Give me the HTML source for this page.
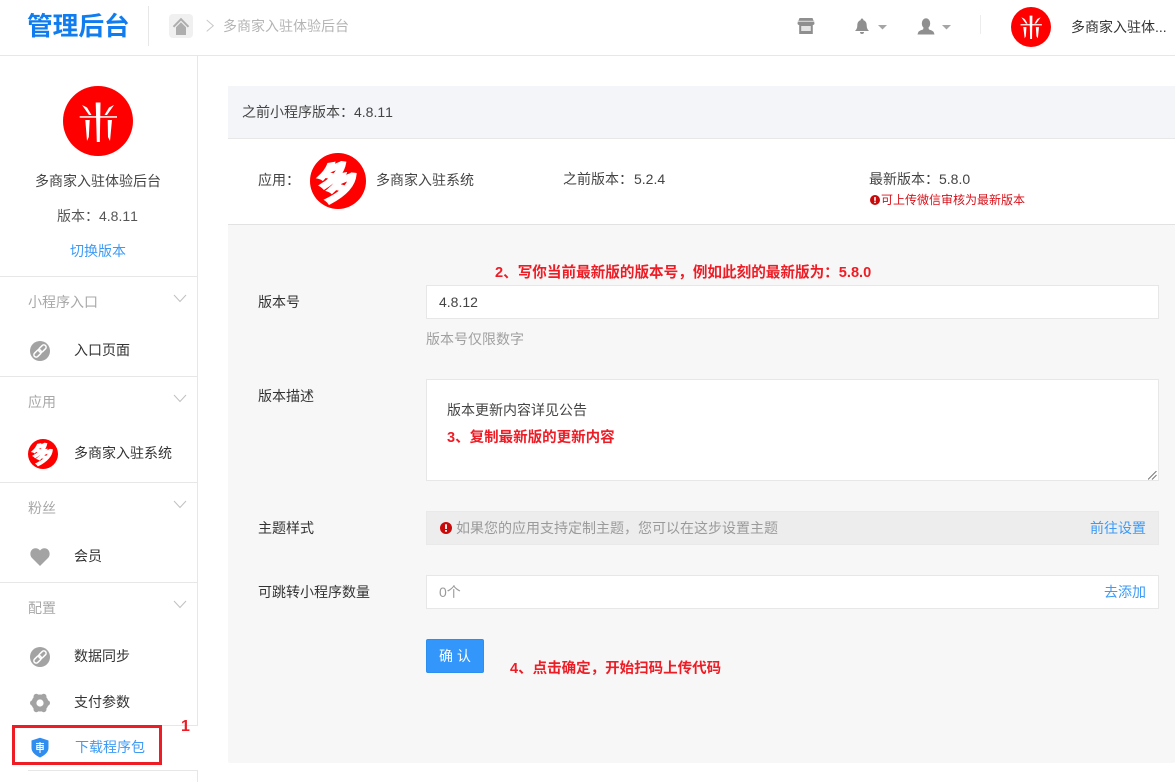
<!DOCTYPE html>
<html lang="zh">
<head>
<meta charset="utf-8">
<style>
html,body{margin:0;padding:0;background:#fff;}
body{width:1175px;height:782px;overflow:hidden;position:relative;font-family:"Liberation Sans","Noto Sans CJK SC",sans-serif;font-size:14px;color:#333;font-kerning:none;}
.a{position:absolute;}
.t{position:absolute;white-space:nowrap;line-height:20px;height:20px;}
.g{color:#a8a8a8;}
.d{color:#444;}
.b{color:#3d9bf5;}
.r{color:#ee1c25;font-weight:bold;font-size:14.5px;}
.line{position:absolute;background:#e7e7e7;}
.input{position:absolute;background:#fff;border:1px solid #e7e7e7;box-sizing:border-box;}
svg{position:absolute;display:block;}
.duo{position:absolute;border-radius:50%;background:#fe0000;overflow:hidden;}
.duo div{position:absolute;left:0;top:0;width:100%;height:100%;text-align:center;color:#fff;font-weight:bold;font-family:"Noto Sans CJK SC",sans-serif;-webkit-text-stroke-color:#fff;-webkit-text-stroke-style:solid;}
</style>
</head>
<body>
<!-- top bar -->
<div class="line" style="left:0;top:55px;width:1175px;height:1px;"></div>
<div class="t" style="left:27px;top:12px;font-size:25.7px;line-height:30px;height:30px;font-weight:bold;color:#0f7cf0;">管理后台</div>
<div class="line" style="left:148px;top:6px;width:1px;height:40px;"></div>
<div class="a" style="left:169px;top:14px;width:24px;height:24px;background:#f0f0f0;border-radius:4px;"></div>
<svg style="left:172px;top:17px" width="18" height="18" viewBox="0 0 18 18"><path d="M1.500 9.800 L9 2.200 L16.500 9.800" fill="none" stroke="#aeaeae" stroke-width="2"/><path d="M9 5.200 L14 10.200 V18 H4 V10.200 Z" fill="#aeaeae"/></svg>
<svg style="left:205px;top:19px" width="12" height="15" viewBox="0 0 12 15"><path d="M1.700 1 L8.300 6.700 L1.700 12.400" fill="none" stroke="#c8c8c8" stroke-width="1"/></svg>
<div class="t" style="left:223px;top:16px;color:#b4b4b4;">多商家入驻体验后台</div>

<svg style="left:797px;top:17px" width="18" height="18" viewBox="0 0 18 18"><path d="M2.500 1 H15.500 L17.500 6 Q17.500 8 15.800 8 V17 H2.200 V8 Q.5 8 .5 6 Z" fill="#8f8f8f"/><rect x="4.200" y="9" width="9.600" height="5" fill="#e4e4e4"/><rect x=".5" y="3.800" width="17" height="1" fill="#e0e0e0"/></svg>
<svg style="left:854px;top:18px" width="16" height="17" viewBox="0 0 16 17"><path d="M8 0.500 a1.300 1.300 0 0 1 1.300 1.600 C12 3 12.700 5 12.700 7.500 C12.700 10 13.500 11.500 15 13 H1 C2.500 11.500 3.300 10 3.300 7.500 C3.300 5 4 3 6.700 2.100 A1.300 1.300 0 0 1 8 .5 Z" fill="#8f8f8f"/><path d="M6 14 H10 A2 2 0 0 1 6 14 Z" fill="#8f8f8f"/></svg>
<svg style="left:878px;top:25px" width="9" height="5" viewBox="0 0 9 5"><path d="M0 0 H9 L4.500 4.500 Z" fill="#a5a5a5"/></svg>
<svg style="left:917px;top:18px" width="18" height="17" viewBox="0 0 18 17"><ellipse cx="9" cy="5.500" rx="4.200" ry="5.300" fill="#8f8f8f"/><path d="M6.500 10 L11.500 10 L12 11.500 Q17 12.500 17.500 16.500 H.5 Q1 12.500 6 11.500 Z" fill="#8f8f8f"/></svg>
<svg style="left:942px;top:25px" width="9" height="5" viewBox="0 0 9 5"><path d="M0 0 H9 L4.500 4.500 Z" fill="#a5a5a5"/></svg>
<div class="line" style="left:980px;top:15px;width:1px;height:19px;background:#ececec;"></div>
<svg style="left:1011px;top:7px" width="40" height="40" viewBox="0 0 70 70"><circle cx="35" cy="35" r="35" fill="#fe0000"/><g fill="#fff"><rect x="16.700" y="30" width="37.300" height="2.200"/><path d="M32.500 15 H37.500 L36.800 56 H33.500 Z"/><path d="M18 18 L24 21 L29 29 L26 29 Z"/><path d="M52 18 L46 21 L41 29 L44 29 Z"/><path d="M21.500 35 H27 L26 51 L24 55 Z"/><path d="M43.500 35 H49 L47 55 L44.500 51 Z"/></g></svg>
<div class="t" style="left:1071px;top:17px;color:#333;">多商家入驻体...</div>

<!-- sidebar -->
<div class="line" style="left:197px;top:56px;width:1px;height:670px;"></div>
<div class="line" style="left:197px;top:770px;width:1px;height:12px;"></div>
<svg style="left:63px;top:86px" width="70" height="70" viewBox="0 0 70 70"><circle cx="35" cy="35" r="35" fill="#fe0000"/><g fill="#fff"><rect x="16.700" y="30.200" width="37.300" height="1.500"/><path d="M32.700 16.500 H37.500 L36.800 56 H33.800 Z"/><path d="M19 19 L24 21.500 L28.500 29 L26 29 Z"/><path d="M51 19 L46 21.500 L41.500 29 L44 29 Z"/><path d="M22.300 34 H26.700 L25.800 51 L24 55 Z"/><path d="M44.700 34 H49 L47 55 L45 51 Z"/></g></svg>
<div class="t" style="left:35px;top:171px;color:#444;">多商家入驻体验后台</div>
<div class="t" style="left:57px;top:206px;color:#555;">版本：4.8.11</div>
<div class="t b" style="left:70px;top:241px;">切换版本</div>

<div class="line" style="left:0;top:276px;width:197px;height:1px;"></div>
<div class="t g" style="left:28px;top:292px;">小程序入口</div>
<svg style="left:173px;top:294px" width="14" height="9" viewBox="0 0 14 9"><path d="M1 1 L7 7.500 L13 1" fill="none" stroke="#c0c0c0" stroke-width="1"/></svg>
<svg style="left:30px;top:341px" width="20" height="20" viewBox="0 0 20 20"><circle cx="10" cy="10" r="10" fill="#a3a3a3"/><g fill="none" stroke="#fff" stroke-width="1.500"><rect x="-4.300" y="-2.300" width="8.600" height="4.600" rx="2.300" transform="translate(7.600 12.400) rotate(-45)"/><rect x="-4.300" y="-2.300" width="8.600" height="4.600" rx="2.300" transform="translate(12.400 7.600) rotate(-45)"/></g></svg>
<div class="t" style="left:74px;top:340px;">入口页面</div>

<div class="line" style="left:0;top:376px;width:197px;height:1px;"></div>
<div class="t g" style="left:28px;top:392px;">应用</div>
<svg style="left:173px;top:394px" width="14" height="9" viewBox="0 0 14 9"><path d="M1 1 L7 7.500 L13 1" fill="none" stroke="#c0c0c0" stroke-width="1"/></svg>
<div class="duo" style="left:28px;top:439px;width:30px;height:30px;"><div style="line-height:28px;font-size:21px;-webkit-text-stroke-width:1.300px;transform:rotate(-22deg) scaleX(1.050);">多</div></div>
<div class="t" style="left:74px;top:443px;">多商家入驻系统</div>

<div class="line" style="left:0;top:482px;width:197px;height:1px;"></div>
<div class="t g" style="left:28px;top:498px;">粉丝</div>
<svg style="left:173px;top:500px" width="14" height="9" viewBox="0 0 14 9"><path d="M1 1 L7 7.500 L13 1" fill="none" stroke="#c0c0c0" stroke-width="1"/></svg>
<svg style="left:30px;top:548px" width="20" height="18" viewBox="0 0 20 18"><path d="M10 18 L1.500 9.500 C-1 6 .8 .3 5.500 .3 C7.500 .3 9 1.300 10 2.500 C11 1.300 12.500 .3 14.500 .3 C19.200 .3 21 6 18.500 9.500 Z" fill="#a3a3a3"/></svg>
<div class="t" style="left:74px;top:546px;">会员</div>

<div class="line" style="left:0;top:582px;width:197px;height:1px;"></div>
<div class="t g" style="left:28px;top:598px;">配置</div>
<svg style="left:173px;top:600px" width="14" height="9" viewBox="0 0 14 9"><path d="M1 1 L7 7.500 L13 1" fill="none" stroke="#c0c0c0" stroke-width="1"/></svg>
<svg style="left:30px;top:647px" width="20" height="20" viewBox="0 0 20 20"><circle cx="10" cy="10" r="10" fill="#a3a3a3"/><g fill="none" stroke="#fff" stroke-width="1.500"><rect x="-4.300" y="-2.300" width="8.600" height="4.600" rx="2.300" transform="translate(7.600 12.400) rotate(-45)"/><rect x="-4.300" y="-2.300" width="8.600" height="4.600" rx="2.300" transform="translate(12.400 7.600) rotate(-45)"/></g></svg>
<div class="t" style="left:74px;top:646px;">数据同步</div>
<svg style="left:30px;top:693px" width="20" height="20" viewBox="0 0 20 20"><g fill="#a3a3a3"><circle cx="10" cy="10" r="8.500"/><circle cx="6.300" cy="3.600" r="2.800"/><circle cx="13.700" cy="3.600" r="2.800"/><circle cx="2.800" cy="10" r="2.800"/><circle cx="17.200" cy="10" r="2.800"/><circle cx="6.300" cy="16.400" r="2.800"/><circle cx="13.700" cy="16.400" r="2.800"/></g><circle cx="10" cy="10" r="3.600" fill="#fff"/></svg>
<div class="t" style="left:74px;top:692px;">支付参数</div>
<div class="line" style="left:160px;top:725px;width:38px;height:1px;"></div>

<svg style="left:31px;top:737px" width="18" height="21" viewBox="0 0 18 21"><path d="M9 .8 L17.500 3.500 V11 C17.500 15.500 13 18.800 9 20.500 C5 18.800 .5 15.500 .5 11 V3.500 Z" fill="#2f8df0"/><g stroke="#fff" stroke-width="1.100" fill="none"><path d="M5 6.500 H13"/><rect x="5.800" y="8.500" width="6.400" height="4"/><path d="M5.800 10.500 H12.200"/><path d="M9 5 V16"/></g></svg>
<div class="t b" style="left:75px;top:737px;">下载程序包</div>
<div class="a" style="left:12px;top:725px;width:150px;height:40px;box-sizing:border-box;border:3px solid #ee1c25;"></div>
<div class="t r" style="left:181px;top:717px;font-size:16px;">1</div>
<div class="line" style="left:28px;top:770px;width:170px;height:1px;"></div>

<!-- main panel -->
<div class="a" style="left:228px;top:86px;width:947px;height:677px;background:#f7f7f7;border-radius:2px;"></div>
<div class="a" style="left:228px;top:86px;width:947px;height:52px;background:#f4f5f9;"></div>
<div class="line" style="left:228px;top:138px;width:947px;height:1px;"></div>
<div class="a" style="left:228px;top:139px;width:947px;height:85px;background:#fff;"></div>
<div class="line" style="left:228px;top:224px;width:947px;height:1px;background:#e2e2e2;"></div>

<div class="t d" style="left:242px;top:102px;">之前小程序版本：4.8.11</div>
<div class="t d" style="left:258px;top:170px;">应用：</div>
<div class="duo" style="left:310px;top:153px;width:56px;height:56px;"><div style="line-height:52px;font-size:39px;-webkit-text-stroke-width:2.400px;transform:rotate(-22deg) scaleX(1.050);">多</div></div>
<div class="t d" style="left:376px;top:170px;">多商家入驻系统</div>
<div class="t d" style="left:563px;top:169px;">之前版本：<span style="margin-left:1px">5.2.4</span></div>
<div class="t d" style="left:869px;top:169px;">最新版本：5.8.0</div>
<svg style="left:870px;top:195px" width="10" height="10" viewBox="0 0 10 10"><circle cx="5" cy="5" r="5" fill="#c80a0a"/><rect x="4.200" y="2" width="1.600" height="3.800" fill="#fff"/><rect x="4.200" y="6.600" width="1.600" height="1.500" fill="#fff"/></svg>
<div class="t" style="left:881px;top:190px;font-size:12px;color:#d8111a;">可上传微信审核为最新版本</div>

<div class="t r" style="left:495px;top:263px;font-size:14.6px;">2、写你当前最新版的版本号，例如此刻的最新版为：5.8.0</div>

<div class="t d" style="left:258px;top:292px;color:#333;">版本号</div>
<div class="input" style="left:426px;top:285px;width:733px;height:34px;"></div>
<div class="t d" style="left:439px;top:292px;">4.8.12</div>
<div class="t" style="left:426px;top:329px;color:#a0a0a0;">版本号仅限数字</div>

<div class="t" style="left:258px;top:386px;">版本描述</div>
<div class="input" style="left:426px;top:379px;width:733px;height:102px;"></div>
<div class="t d" style="left:447px;top:400px;">版本更新内容详见公告</div>
<div class="t r" style="left:447px;top:428px;">3、复制最新版的更新内容</div>
<svg style="left:1148px;top:471px" width="9" height="9" viewBox="0 0 9 9"><path d="M0 8.500 L8.500 0 M4 8.500 L8.500 4" stroke="#777" stroke-width="1"/></svg>

<div class="t" style="left:258px;top:518px;">主题样式</div>
<div class="a" style="left:426px;top:511px;width:733px;height:34px;box-sizing:border-box;background:#ededed;border:1px solid #e9e9e9;"></div>
<svg style="left:440px;top:522px" width="12" height="12" viewBox="0 0 12 12"><circle cx="6" cy="6" r="6" fill="#c80a0a"/><rect x="5.100" y="2.300" width="1.800" height="4.700" fill="#fff"/><rect x="5.100" y="8" width="1.800" height="1.700" fill="#fff"/></svg>
<div class="t" style="left:456px;top:518px;color:#9a9a9a;">如果您的应用支持定制主题，您可以在这步设置主题</div>
<div class="t b" style="left:1090px;top:518px;">前往设置</div>

<div class="t" style="left:258px;top:582px;">可跳转小程序数量</div>
<div class="input" style="left:426px;top:575px;width:733px;height:34px;"></div>
<div class="t" style="left:439px;top:582px;color:#9a9a9a;">0个</div>
<div class="t b" style="left:1104px;top:582px;">去添加</div>

<div class="a" style="left:426px;top:639px;width:58px;height:34px;background:#3296fa;border-radius:2px;border:1px solid #2b8ff0;box-sizing:border-box;color:#fff;text-align:center;line-height:32px;font-size:14px;">确 认</div>
<div class="t r" style="left:510px;top:659px;">4、点击确定，开始扫码上传代码</div>
</body>
</html>
